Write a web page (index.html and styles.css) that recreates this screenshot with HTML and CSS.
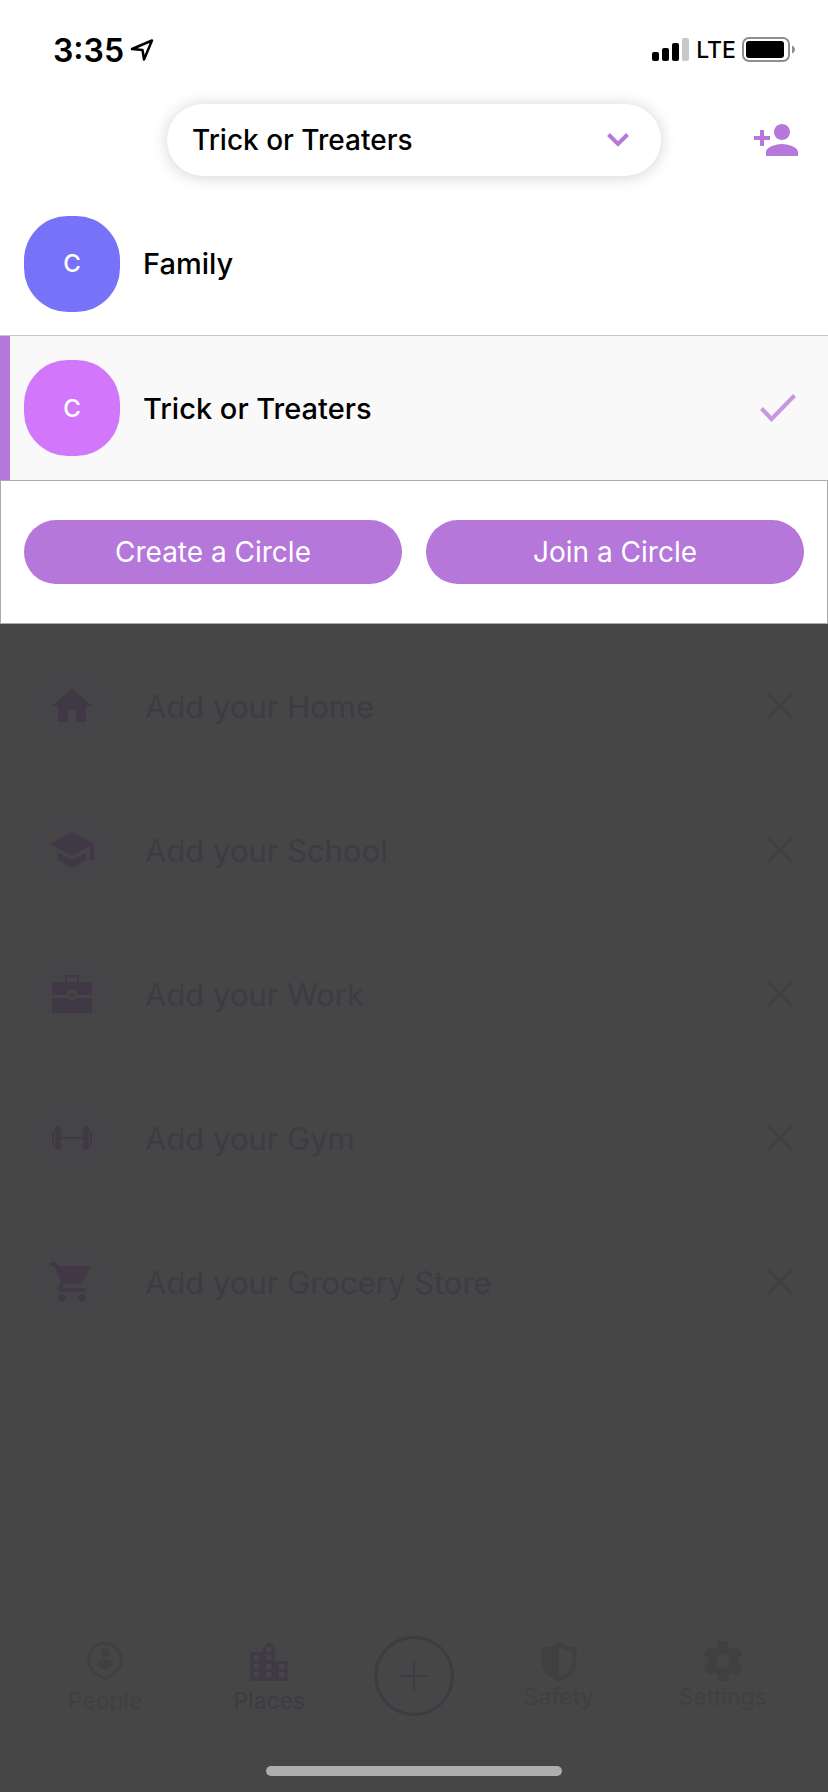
FILE: index.html
```
<!DOCTYPE html>
<html lang="en">
<head>
  <meta charset="UTF-8">
  <meta name="viewport" content="width=device-width, initial-scale=1.0">
  <title>Places</title>
  <link rel="stylesheet" href="styles.css">
</head>
<body>
  <div id="app">
    <!-- Status bar -->
    <div class="status-bar">
      <div class="status-left">
        <span class="time">3:35</span>
        <svg width="24" height="24" viewBox="0 0 24 24" fill="none" stroke="#000" stroke-width="2.500" stroke-linejoin="round"><path d="M2 11L22 2.500L14 21.500L12.500 12Z"/></svg>
      </div>
      <div class="status-right">
        <svg width="38" height="26" viewBox="0 0 38 26">
          <rect x="0" y="15" width="7" height="9" rx="2"/>
          <rect x="10" y="11" width="7" height="13" rx="2"/>
          <rect x="20" y="6" width="7" height="18" rx="2"/>
          <rect x="30" y="1" width="7" height="23" rx="2" fill="#c8c8ca"/>
        </svg>
        <span class="network">LTE</span>
        <svg width="54" height="26" viewBox="0 0 54 26">
          <rect x="1" y="1" width="46" height="23" rx="6" fill="none" stroke="#8e8e8e" stroke-width="2"/>
          <rect x="4" y="4" width="38" height="17" rx="3"/>
          <path d="M50 8.500c4 1.500 4 6.500 0 8z" fill="#8e8e8e"/>
        </svg>
      </div>
    </div>

    <!-- Circle picker -->
    <header class="header">
      <button class="circle-select" type="button" aria-expanded="true" aria-controls="circleList">
        Trick or Treaters
        <svg width="24" height="24" viewBox="0 0 24 24" fill="none" stroke="#b577d9" stroke-width="4"><path d="M2.500 6.500L12 16L21.500 6.500"/></svg>
      </button>
      <button class="add-person" type="button" aria-label="Add person">
        <svg width="48" height="48" viewBox="0 0 24 24" fill="#b577d9"><path d="M15 12c2.210 0 4-1.790 4-4s-1.790-4-4-4-4 1.790-4 4 1.790 4 4 4zm-9-2V7H4v3H1v2h3v3h2v-3h3v-2H6zm9 4c-2.670 0-8 1.340-8 4v2h16v-2c0-2.660-5.330-4-8-4z"/></svg>
      </button>
    </header>

    <div class="circle-list" id="circleList">
      <button class="circle-row" type="button">
        <span class="avatar avatar-blue">C</span>
        <span class="circle-name">Family</span>
      </button>
      <button class="circle-row selected" type="button" aria-current="true">
        <span class="avatar avatar-pink">C</span>
        <span class="circle-name">Trick or Treaters</span>
        <svg width="40" height="40" viewBox="0 0 40 40" fill="none" stroke="#c896e3" stroke-width="4"><path d="M3.500 20.500L13.500 31L36.500 7.500"/></svg>
      </button>
    </div>

    <div class="circle-actions">
      <button type="button">Create a Circle</button>
      <button type="button">Join a Circle</button>
    </div>

    <!-- Dimmed places screen -->
    <main class="places">
      <ul class="place-list">
        <li class="place-row">
          <span class="place-icon"><svg width="48" height="48" viewBox="0 0 24 24"><path d="M10 20v-6h4v6h5v-8h3L12 3 2 12h3v8z"/></svg></span>
          <a href="#home">Add your Home</a>
          <button type="button" aria-label="Dismiss Home"><svg width="28" height="28" viewBox="0 0 28 28"><path d="M2 2L26 26M26 2L2 26"/></svg></button>
        </li>
        <li class="place-row">
          <span class="place-icon"><svg width="48" height="48" viewBox="0 0 24 24"><path d="M5 13.180v4L12 21l7-3.820v-4L12 17l-7-3.820zM12 3L1 9l11 6 9-4.910V17h2V9L12 3z"/></svg></span>
          <a href="#school">Add your School</a>
          <button type="button" aria-label="Dismiss School"><svg width="28" height="28" viewBox="0 0 28 28"><path d="M2 2L26 26M26 2L2 26"/></svg></button>
        </li>
        <li class="place-row">
          <span class="place-icon"><svg width="48" height="48" viewBox="0 0 48 48"><path fill-rule="evenodd" d="M17 5h14v7h13v13H29a5 5 0 0 0-10 0H4V12h13zM19 7v5h10V7zM4 28h16a5 5 0 0 0 8 0h16v15H4z"/><path d="M22 24h4v2.500h-1l-1-1-1 1h-1z"/></svg></span>
          <a href="#work">Add your Work</a>
          <button type="button" aria-label="Dismiss Work"><svg width="28" height="28" viewBox="0 0 28 28"><path d="M2 2L26 26M26 2L2 26"/></svg></button>
        </li>
        <li class="place-row">
          <span class="place-icon"><svg width="48" height="48" viewBox="0 0 48 48"><rect x="7" y="12" width="6" height="24" rx="3"/><rect x="35" y="12" width="6" height="24" rx="3"/><rect x="4" y="18" width="2" height="13" rx="1"/><rect x="42" y="18" width="2" height="13" rx="1"/><rect x="12" y="23" width="24" height="2"/></svg></span>
          <a href="#gym">Add your Gym</a>
          <button type="button" aria-label="Dismiss Gym"><svg width="28" height="28" viewBox="0 0 28 28"><path d="M2 2L26 26M26 2L2 26"/></svg></button>
        </li>
        <li class="place-row">
          <span class="place-icon"><svg width="48" height="48" viewBox="0 0 24 24"><path d="M7 18c-1.100 0-1.990.9-1.990 2S5.900 22 7 22s2-.9 2-2-.9-2-2-2zM1 2v2h2l3.600 7.590-1.350 2.450c-.16.28-.25.61-.25.96 0 1.100.9 2 2 2h12v-2H7.420c-.14 0-.25-.11-.25-.25l.03-.12.9-1.630h7.450c.75 0 1.410-.41 1.750-1.030l3.580-6.490c.08-.14.12-.31.12-.48 0-.55-.45-1-1-1H5.210l-.94-2H1zm16 16c-1.100 0-1.990.9-1.990 2s.89 2 1.990 2 2-.9 2-2-.9-2-2-2z"/></svg></span>
          <a href="#grocery">Add your Grocery Store</a>
          <button type="button" aria-label="Dismiss Grocery Store"><svg width="28" height="28" viewBox="0 0 28 28"><path d="M2 2L26 26M26 2L2 26"/></svg></button>
        </li>
      </ul>

      <nav class="tab-bar">
        <a class="tab" href="#people">
          <svg width="40" height="40" viewBox="0 0 40 40"><path d="M20 2.500C10.500 2.500 3.500 9.500 3.500 18.500c0 6 3.500 11 8.500 14.500 3 1.500 5.500 2.500 8 5 2.500-2.500 5-3.500 8-5 5-3.500 8.500-8.500 8.500-14.500 0-9-7-16-16.500-16z" fill="none" stroke="currentColor" stroke-width="3"/><circle cx="20" cy="12" r="4.500"/><path d="M12 23.500c0-3.500 4-5 8-5s8 1.500 8 5c-2 3-5 4.500-8 4.500s-6-1.500-8-4.500z"/></svg>
          People
        </a>
        <a class="tab active" href="#places">
          <svg width="40" height="40" viewBox="0 0 40 40"><path fill-rule="evenodd" d="M1 11h13V7l6-6 6 6v13h13v20H1zM5 14v5h5v-5zM5 23v5h5v-5zM5 31v5h5v-5zM17.500 6v5h5V6zM17.500 14v5h5v-5zM17.500 23v5h5v-5zM17.500 31v5h5v-5zM30 23v5h5v-5zM30 31v5h5v-5z"/></svg>
          Places
        </a>
        <button class="add-place" type="button" aria-label="Add place">
          <svg width="28" height="28" viewBox="0 0 28 28" fill="none" stroke="currentColor" stroke-width="2"><path d="M14 0V28M0 14H28"/></svg>
        </button>
        <a class="tab compact" href="#safety">
          <svg width="40" height="40" viewBox="0 0 40 40"><path fill-rule="evenodd" d="M20 1l5 3c4 2 8 2 12.500 2v14c0 10-7 17-17.500 20C9.500 37 2.500 30 2.500 20V6C7 6 11 6 15 4zM20 5v31c8-2.500 13.500-8 13.500-16V10c-6-.5-9-1-13.500-5z"/></svg>
          Safety
        </a>
        <a class="tab compact" href="#settings">
          <svg width="40" height="40" viewBox="2 2 20 20"><path d="M19.430 12.980c.04-.32.07-.64.07-.98s-.03-.66-.07-.98l2.110-1.650c.19-.15.24-.42.12-.64l-2-3.460c-.12-.22-.39-.3-.61-.22l-2.490 1c-.52-.4-1.080-.73-1.690-.98l-.38-2.650C14.460 2.180 14.250 2 14 2h-4c-.25 0-.46.18-.49.42l-.38 2.650c-.61.25-1.170.59-1.690.98l-2.490-1c-.23-.09-.49 0-.61.22l-2 3.460c-.13.22-.07.49.12.64l2.110 1.650c-.04.32-.07.65-.07.98s.03.66.07.98l-2.110 1.650c-.19.15-.24.42-.12.64l2 3.460c.12.22.39.3.61.22l2.490-1c.52.4 1.080.73 1.690.98l.38 2.650c.03.24.24.42.49.42h4c.25 0 .46-.18.49-.42l.38-2.650c.61-.25 1.170-.59 1.690-.98l2.490 1c.23.09.49 0 .61-.22l2-3.460c.12-.22.07-.49-.12-.64l-2.110-1.650zM12 15.500c-1.930 0-3.500-1.570-3.500-3.500s1.570-3.500 3.500-3.500 3.500 1.570 3.500 3.500-1.570 3.500-3.500 3.500z"/></svg>
          Settings
        </a>
      </nav>
      <div class="home-indicator"></div>
    </main>
  </div>
</body>
</html>
```

FILE: styles.css
```
* {
  box-sizing: border-box;
}

body {
  font-family: Inter, "Liberation Sans", sans-serif;
  margin: 0;
  background-color: #fff;
  color: #000;
}

button {
  font-family: inherit;
  color: inherit;
  border: none;
  background: none;
  padding: 0;
  cursor: pointer;
}

a {
  color: inherit;
  text-decoration: none;
}

svg {
  display: block;
  flex-shrink: 0;
}

#app {
  min-height: 100vh;
  display: flex;
  flex-direction: column;
}

/* Status bar */
.status-bar {
  display: flex;
  justify-content: space-between;
  align-items: center;
  height: 88px;
  padding: 12px 32px 0 53px;
}

.status-left,
.status-right {
  display: flex;
  align-items: center;
  gap: 6px;
}

.time {
  font-size: 32px;
  font-weight: 600;
}

.network {
  font-size: 23px;
  font-weight: 500;
}

/* Header */
.header {
  display: grid;
  grid-template-columns: 1fr 64% 1fr;
  align-items: center;
  height: 104px;
  padding: 0 28px;
}

.circle-select {
  grid-column: 2;
  display: flex;
  justify-content: space-between;
  align-items: center;
  height: 72px;
  padding: 0 31px 0 25px;
  border-radius: 36px;
  background-color: #fff;
  box-shadow: 0 1px 16px rgba(0, 0, 0, 0.18);
  font-size: 28px;
  font-weight: 500;
}

.add-person {
  justify-self: end;
}

/* Circles */
.circle-row {
  display: flex;
  align-items: center;
  gap: 23px;
  width: 100%;
  height: 144px;
  padding: 0 30px 0 24px;
  border-bottom: 1px solid #c4c4c4;
  text-align: left;
}

.circle-row.selected {
  background-color: #f9f9f9;
  box-shadow: inset 10px 0 #b577d9;
  border-bottom: none;
}

.avatar {
  display: flex;
  justify-content: center;
  align-items: center;
  width: 96px;
  height: 96px;
  border-radius: 44px;
  color: #fff;
  font-size: 24px;
  font-weight: 500;
}

.avatar-blue {
  background-color: #7872f8;
}

.avatar-pink {
  background-color: #d277fb;
}

.circle-name {
  flex: 1;
  font-size: 29px;
  font-weight: 500;
}

.circle-actions {
  display: flex;
  align-items: center;
  gap: 24px;
  height: 144px;
  padding: 0 23px;
  border: 1px solid #aaa;
}

.circle-actions button {
  flex: 1;
  height: 64px;
  border-radius: 32px;
  background-color: #b577d9;
  color: #fff;
  font-size: 28px;
  font-weight: 400;
}

/* Places */
.places {
  flex: 1;
  display: flex;
  flex-direction: column;
  padding: 10px 0 16px;
  background-color: #464646;
  color: #403a45;
}

.place-list {
  flex: 1;
  margin: 0;
  padding: 0;
  list-style: none;
}

.place-row {
  display: flex;
  align-items: center;
  gap: 31px;
  height: 144px;
  padding: 0 34px 0 30px;
  font-size: 31px;
}

.place-row a {
  flex: 1;
}

.place-icon {
  display: flex;
  justify-content: center;
  align-items: center;
  width: 84px;
  height: 84px;
  border-radius: 50%;
  background-color: #454547;
}

.place-icon svg {
  fill: #403945;
}

.place-row button svg {
  stroke: #404040;
  stroke-width: 3;
}

/* Tab bar */
.tab-bar {
  display: grid;
  grid-template-columns: 21fr 21fr 16fr 21fr 21fr;
  justify-items: center;
  height: 136px;
  padding: 5px 23px 0;
  border-top: 1px solid #444;
}

.tab {
  display: flex;
  flex-direction: column;
  align-items: center;
  gap: 6px;
  height: 80px;
  padding-top: 5px;
  color: #404040;
  font-size: 23px;
}

.tab.compact {
  gap: 2px;
}

.tab.active {
  color: #403a45;
}

.tab svg {
  fill: currentColor;
}

.add-place {
  display: flex;
  justify-content: center;
  align-items: center;
  width: 80px;
  height: 80px;
  border: 3px solid #403a45;
  border-radius: 50%;
  color: #403a45;
}

.home-indicator {
  align-self: center;
  width: 296px;
  height: 10px;
  border-radius: 5px;
  background-color: #aeaeae;
}
```
